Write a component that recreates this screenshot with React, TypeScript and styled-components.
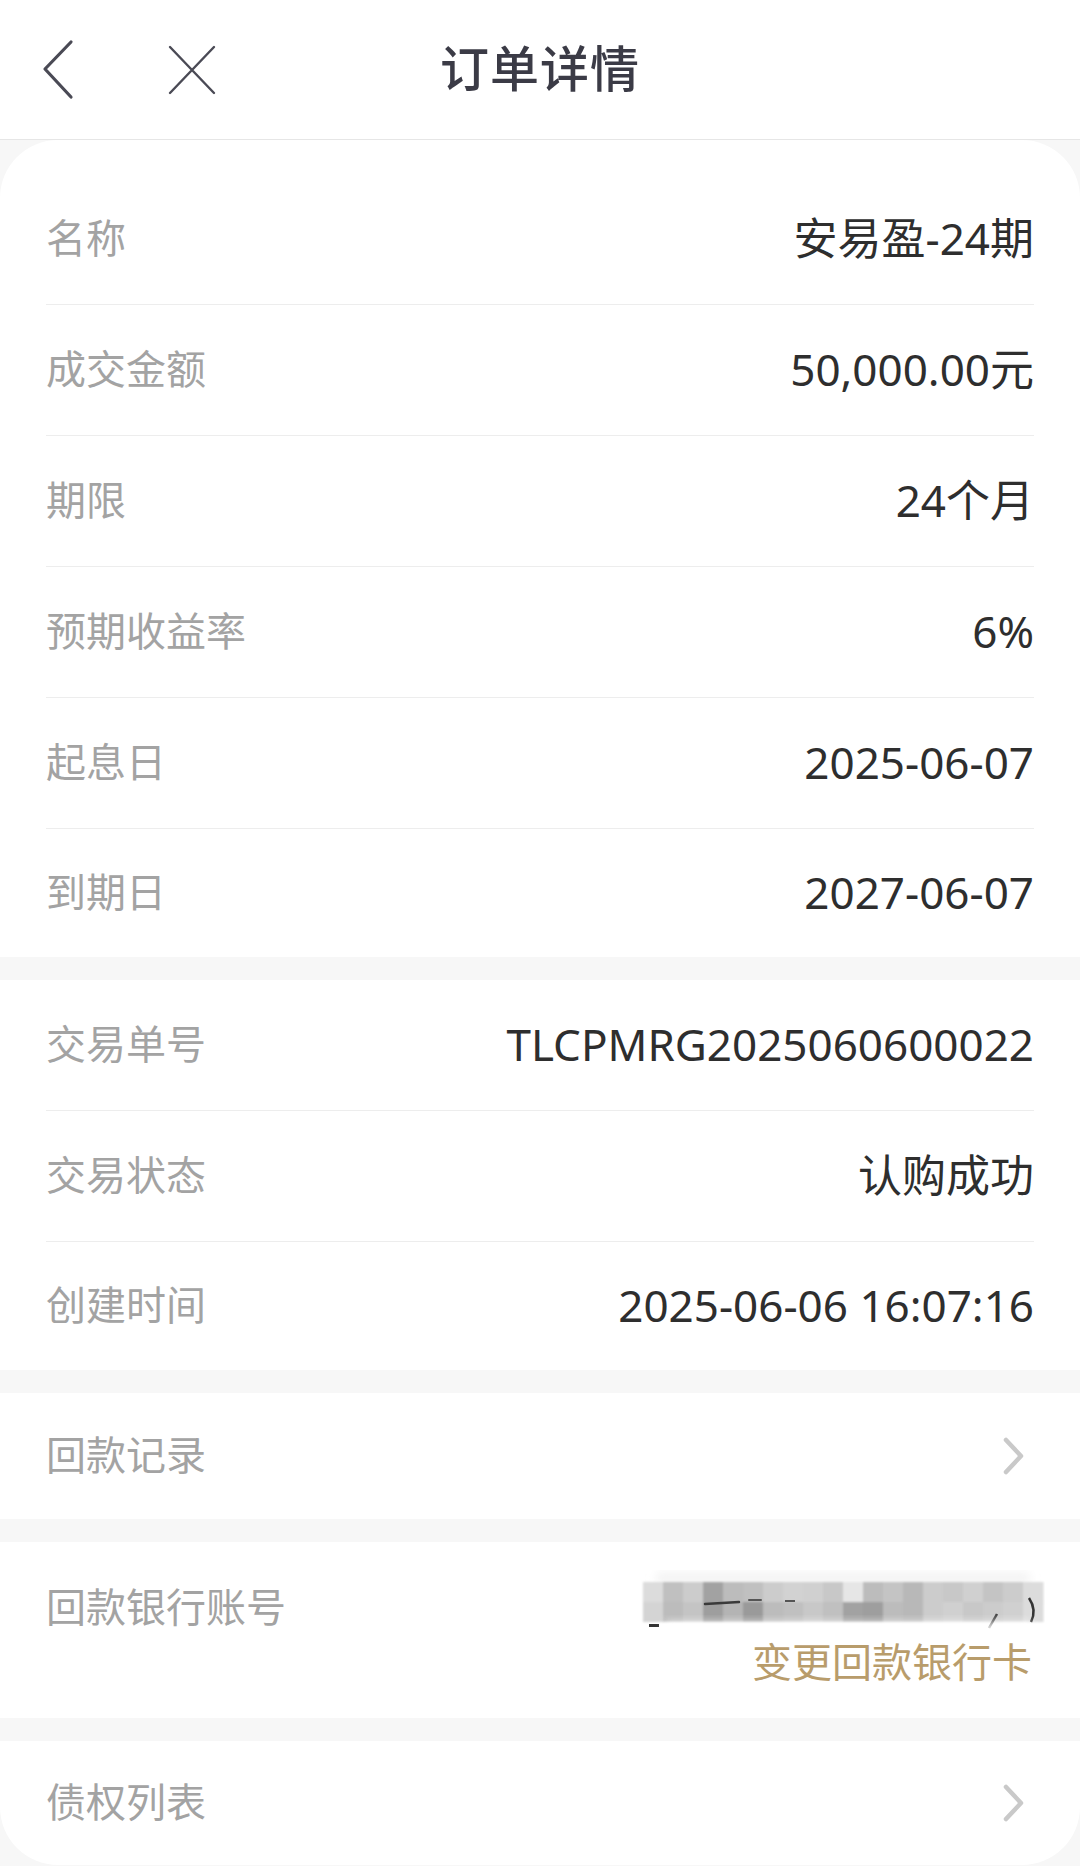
import React from "react";
import styled, { createGlobalStyle } from "styled-components";

const Global = createGlobalStyle`
  html, body { margin: 0; padding: 0; }
  body {
    background: #f7f7f7;
    font-family: "Noto Sans", "Noto Sans CJK SC", sans-serif;
    -webkit-font-smoothing: antialiased;
  }
  * { box-sizing: border-box; }
`;

const Page = styled.div`
  width: 1080px;
  min-height: 1866px;
  background: #f7f7f7;
  overflow: hidden;
`;

const Header = styled.header`
  height: 140px;
  background: #ffffff;
  border-bottom: 1px solid #e6e6e6;
  display: grid;
  grid-template-columns: 1fr auto 1fr;
  align-items: center;
`;

const NavIcons = styled.div`
  display: flex;
  align-items: center;
  padding-left: 40px;
  gap: 92px;
`;

const IconButton = styled.button<{ $w: number }>`
  border: 0;
  background: none;
  padding: 0;
  display: flex;
  align-items: center;
  justify-content: center;
  width: ${(p) => p.$w}px;
  height: 60px;
`;

const Title = styled.h1`
  margin: 0 0 8px;
  font-family: "Noto Sans CJK SC", sans-serif;
  font-size: 49px;
  line-height: 56px;
  font-weight: 500;
  color: #3b3b46;
  letter-spacing: 1px;
`;

const Sections = styled.main`
  display: flex;
  flex-direction: column;
  gap: 23px;
`;

const Card = styled.section<{ $top?: boolean; $bottom?: boolean }>`
  background: #ffffff;
  padding: ${(p) => (p.$top ? "34px" : "0")} 46px 0;
  border-radius: ${(p) => (p.$top ? "58px 58px 0 0" : p.$bottom ? "0 0 58px 58px" : "0")};
  display: flex;
  flex-direction: column;
`;

const Row = styled.div<{ $h?: number }>`
  height: ${(p) => p.$h ?? 131}px;
  display: flex;
  align-items: center;
  justify-content: space-between;
  border-bottom: 1px solid #ededed;
  &:last-child {
    border-bottom: 0;
    height: ${(p) => p.$h ?? 128}px;
  }
`;

const TopRow = styled.div`
  height: 176px;
  display: flex;
  align-items: flex-start;
  justify-content: space-between;
`;

const Label = styled.span<{ $pt?: number }>`
  font-family: "Noto Sans CJK SC", sans-serif;
  font-size: 40px;
  line-height: 46px;
  color: #a3a3a3;
  padding-top: ${(p) => p.$pt ?? 0}px;
  padding-bottom: ${(p) => (p.$pt ? 0 : 7)}px;
`;

const Value = styled.span`
  font-family: "Noto Sans", "Noto Sans CJK SC", sans-serif;
  font-size: 44px;
  line-height: 52px;
  color: #2e2e2e;
  white-space: nowrap;
  padding-bottom: 3px;
`;

const RightStack = styled.div`
  display: flex;
  flex-direction: column;
  align-items: flex-end;
  padding-top: 28px;
`;

const Masked = styled.svg`
  display: block;
  margin-right: -11px;
`;

const LinkText = styled.span`
  font-family: "Noto Sans CJK SC", sans-serif;
  font-size: 40px;
  line-height: 48px;
  color: #b89c6b;
  margin-right: 2px;
`;

const Chevron = () => (
  <svg width="24" height="38" viewBox="0 0 24 38" style={{ marginRight: 8 }}>
    <path d="M4 3 L19 19 L4 35" fill="none" stroke="#c9c9c9" strokeWidth="4.5" strokeLinecap="round" strokeLinejoin="round" />
  </svg>
);

const row1 = [0xdc, 0xc0, 0xcc, 0xa2, 0xbc, 0xc0, 0xcc, 0xd2, 0xd0, 0xc8, 0xe6, 0xbc, 0xc4, 0xb8, 0xcc, 0xc8, 0xd0, 0xc4, 0xcc, 0xdc];
const row2 = [0xd4, 0xbc, 0xc4, 0x9e, 0xb4, 0x9a, 0xbc, 0xc0, 0xc8, 0xc0, 0xa2, 0x9e, 0xbc, 0xb8, 0xcc, 0xd0, 0xc8, 0xcc, 0xd0, 0xdc];
const hex = (v: number) => {
  const h = v.toString(16).padStart(2, "0");
  return `#${h}${h}${h}`;
};

const Mosaic = () => (
  <Masked width="404" height="66" viewBox="0 0 404 66">
    <defs>
      <filter id="soft" x="-5%" y="-20%" width="110%" height="140%">
        <feGaussianBlur stdDeviation="0.9" />
      </filter>
      <filter id="glow" x="-10%" y="-50%" width="120%" height="200%">
        <feGaussianBlur stdDeviation="4" />
      </filter>
    </defs>
    <rect x="14" y="2" width="376" height="12" rx="6" fill="#f4f4f4" filter="url(#glow)" />
    <g filter="url(#soft)">
      {row1.map((v, i) => (
        <rect key={`a${i}`} x={2 + i * 20} y={12} width={20.5} height={20.5} fill={hex(v)} />
      ))}
      {row2.map((v, i) => (
        <rect key={`b${i}`} x={2 + i * 20} y={32} width={20.5} height={20} fill={hex(v)} />
      ))}
    </g>
    <path d="M64 34 L98 32" stroke="#3a3a3a" strokeWidth="2.5" strokeLinecap="round" />
    <path d="M108 30 L120 30" stroke="#555" strokeWidth="2" strokeLinecap="round" />
    <path d="M144 31 L154 31" stroke="#555" strokeWidth="2" />
    <path d="M388 28 Q396 40 390 52" stroke="#333" strokeWidth="2.5" fill="none" />
    <path d="M356 44 L348 58" stroke="#444" strokeWidth="2.5" />
    <rect x="8" y="54" width="10" height="3" fill="#333" />
    <rect x="24" y="52" width="366" height="14" fill="#ffffff" opacity="0.85" filter="url(#glow)" />
  </Masked>
);

const group1: [string, string][] = [
  ["名称", "安易盈-24期"],
  ["成交金额", "50,000.00元"],
  ["期限", "24个月"],
  ["预期收益率", "6%"],
  ["起息日", "2025-06-07"],
  ["到期日", "2027-06-07"],
];

const group2: [string, string][] = [
  ["交易单号", "TLCPMRG2025060600022"],
  ["交易状态", "认购成功"],
  ["创建时间", "2025-06-06 16:07:16"],
];

export default function App() {
  return (
    <Page>
      <Global />
      <Header>
        <NavIcons>
          <IconButton $w={36} aria-label="返回">
            <svg width="36" height="62" viewBox="0 0 36 62">
              <path d="M31 3 L5 30 L31 58" fill="none" stroke="#4a4a55" strokeWidth="3.2" strokeLinecap="round" strokeLinejoin="round" />
            </svg>
          </IconButton>
          <IconButton $w={48} aria-label="关闭">
            <svg width="48" height="50" viewBox="0 0 48 50">
              <path d="M2 2 L46 48 M46 2 L2 48" fill="none" stroke="#4a4a55" strokeWidth="2.4" strokeLinecap="round" />
            </svg>
          </IconButton>
        </NavIcons>
        <Title>订单详情</Title>
        <div />
      </Header>
      <Sections>
        <Card $top>
          {group1.map(([k, v]) => (
            <Row key={k}>
              <Label>{k}</Label>
              <Value>{v}</Value>
            </Row>
          ))}
        </Card>
        <Card>
          {group2.map(([k, v]) => (
            <Row key={k}>
              <Label>{k}</Label>
              <Value>{v}</Value>
            </Row>
          ))}
        </Card>
        <Card>
          <Row $h={126}>
            <Label>回款记录</Label>
            <Chevron />
          </Row>
        </Card>
        <Card>
          <TopRow>
            <Label $pt={40}>回款银行账号</Label>
            <RightStack>
              <Mosaic />
              <LinkText>变更回款银行卡</LinkText>
            </RightStack>
          </TopRow>
        </Card>
        <Card $bottom>
          <Row $h={124}>
            <Label>债权列表</Label>
            <Chevron />
          </Row>
        </Card>
      </Sections>
    </Page>
  );
}
